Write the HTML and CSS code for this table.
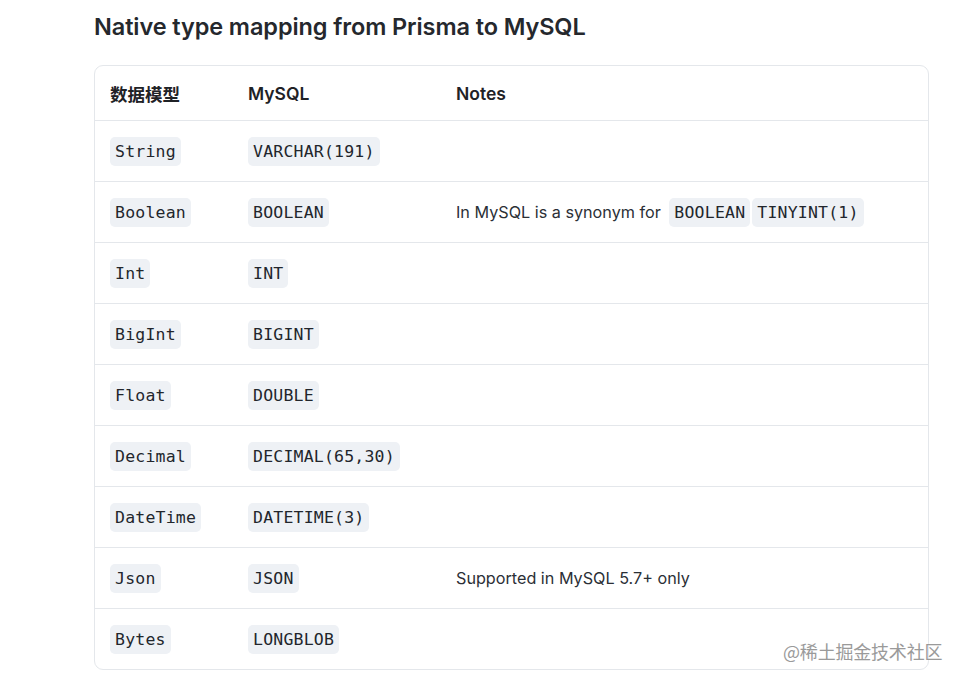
FILE: index.html
```html
<!DOCTYPE html>
<html>
<head>
<meta charset="utf-8">
<link rel="stylesheet" href="styles.css">
</head>
<body>
<div class="page">
  <h2 class="title">Native type mapping from Prisma to MySQL</h2>
  <div class="table-wrap">
    <table class="tbl">
      <thead>
        <tr><th class="c1">数据模型</th><th class="c2">MySQL</th><th class="c3">Notes</th></tr>
      </thead>
      <tbody>
        <tr><td><code>String</code></td><td><code>VARCHAR(191)</code></td><td></td></tr>
        <tr><td><code>Boolean</code></td><td><code>BOOLEAN</code></td><td>In MySQL is a synonym for <code>BOOLEAN</code><code>TINYINT(1)</code></td></tr>
        <tr><td><code>Int</code></td><td><code>INT</code></td><td></td></tr>
        <tr><td><code>BigInt</code></td><td><code>BIGINT</code></td><td></td></tr>
        <tr><td><code>Float</code></td><td><code>DOUBLE</code></td><td></td></tr>
        <tr><td><code>Decimal</code></td><td><code>DECIMAL(65,30)</code></td><td></td></tr>
        <tr><td><code>DateTime</code></td><td><code>DATETIME(3)</code></td><td></td></tr>
        <tr><td><code>Json</code></td><td><code>JSON</code></td><td>Supported in MySQL 5.7+ only</td></tr>
        <tr><td><code>Bytes</code></td><td><code>LONGBLOB</code></td><td></td></tr>
      </tbody>
    </table>
  </div>
  <div class="watermark">@稀土掘金技术社区</div>
</div>
</body>
</html>
```
FILE: styles.css
```css
html, body {
  margin: 0;
  padding: 0;
  background: #ffffff;
}
.page {
  position: relative;
  width: 963px;
  height: 682px;
  padding: 0 35px 0 94px;
  box-sizing: border-box;
  font-family: Inter, "Noto Sans CJK SC", sans-serif;
  color: #1c1e21;
}
.title {
  margin: 0;
  padding-top: 11px;
  height: 65px;
  box-sizing: border-box;
  font-size: 23.5px;
  font-weight: 600;
  line-height: 32px;
  color: #25282d;
  letter-spacing: -0.1px;
}
.table-wrap {
  border: 1px solid #e4e7eb;
  border-radius: 9px;
  overflow: hidden;
  width: 835px;
  box-sizing: border-box;
}
.tbl {
  width: 100%;
  border-collapse: collapse;
  font-size: 16.2px;
  color: #2b2f36;
}
.tbl th {
  text-align: left;
  font-weight: 600;
  font-size: 17.5px;
  height: 54px;
  padding: 0 15px;
  color: #1f2226;
  font-family: Inter, "Noto Sans CJK SC", sans-serif;
}
.tbl th.c1 { width: 108px; }
.tbl th.c2 { width: 178px; }
.tbl td {
  height: 60px;
  padding: 0 15px;
  border-top: 1px solid #e4e7eb;
  vertical-align: middle;
}
.tbl code {
  font-family: "DejaVu Sans Mono", monospace;
  font-size: 16.5px;
  background: #eef1f5;
  color: #22262c;
  border-radius: 5px;
  padding: 5px 5px;
  letter-spacing: 0.2px;
}
.tbl td code + code {
  margin-left: 2px;
}
.tbl td:nth-child(3) code:first-child {
  margin-left: 4px;
}
.watermark {
  position: absolute;
  left: 783px;
  top: 638px;
  font-size: 18px;
  color: #9a9a9a;
  font-family: "Noto Sans CJK SC", sans-serif;
  text-shadow: 0 0 2px #fff;
  letter-spacing: -0.2px;
}
```
